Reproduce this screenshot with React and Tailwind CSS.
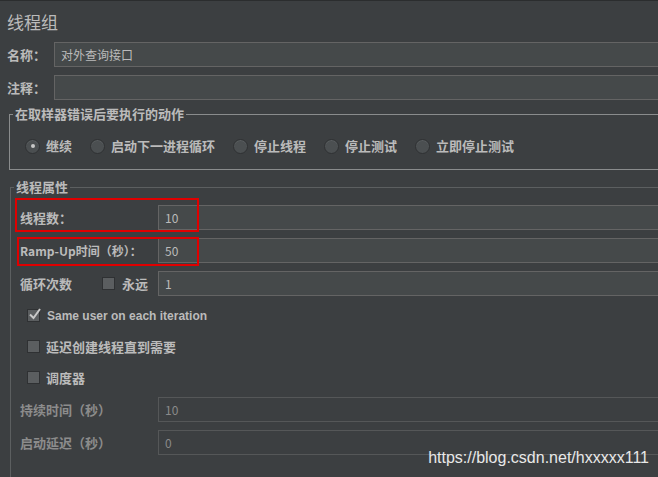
import React from 'react';

const cjk = { fontFamily: '"Noto Sans CJK SC", "Liberation Sans", sans-serif' };

function Radio({ checked }) {
  return (
    <span className="w-[15px] h-[15px] rounded-full border border-[#2f3133] bg-[#4b4f51] shadow-[inset_0_1px_0_#5a5e60] flex items-center justify-center shrink-0">
      {checked && <span className="w-[4px] h-[4px] rounded-full bg-[#c8c8c8]" />}
    </span>
  );
}

function Check({ checked }) {
  return (
    <span className="relative w-[13px] h-[13px] border border-[#2f3133] bg-[#5b5e60] shrink-0 block">
      {checked && (
        <svg className="absolute -top-[3px] left-[0px]" width="14" height="14" viewBox="0 0 14 14">
          <path d="M2 7.5 L5.5 11 L12 2" fill="none" stroke="#c9c9c9" strokeWidth="2" />
        </svg>
      )}
    </span>
  );
}

function Field({ value, disabled }) {
  return (
    <div
      className={`flex-1 h-[25px] border flex items-center pl-[6px] text-[12px] ${
        disabled
          ? 'bg-[#3c3f41] border-[#555758] text-[#8a8a8a]'
          : 'bg-[#45494a] border-[#646464] text-[#bbbbbb]'
      }`}
      style={cjk}
    >
      {value}
    </div>
  );
}

function Row({ label, value, disabled, small, children }) {
  return (
    <div className="relative flex items-center h-[25px]">
      <div
        className={`w-[138px] shrink-0 flex items-center font-bold ${small ? 'text-[12px]' : 'text-[13px]'} ${
          disabled ? 'text-[#8c8c8c]' : 'text-[#bbbbbb]'
        }`}
      >
        {label}
      </div>
      <Field value={value} disabled={disabled} />
      {children}
    </div>
  );
}

export default function App() {
  const actions = ['继续', '启动下一进程循环', '停止线程', '停止测试', '立即停止测试'];

  return (
    <div className="relative w-[658px] h-[477px] overflow-hidden bg-[#3c3f41] border-t border-[#2b2d2e]" style={cjk}>
      <div className="w-[690px]">
        {/* Title */}
        <div className="mt-[11px] pl-[7px] h-[20px] leading-[20px] text-[17px] text-[#bbbbbb]">线程组</div>

        {/* Name / comment */}
        <div className="mt-[10px] flex items-center h-[25px]">
          <div className="w-[54px] pl-[7px] text-[13px] font-bold text-[#bbbbbb]">名称：</div>
          <Field value="对外查询接口" />
        </div>
        <div className="mt-[8px] flex items-center h-[25px]">
          <div className="w-[54px] pl-[7px] text-[13px] font-bold text-[#bbbbbb]">注释：</div>
          <Field value="" />
        </div>

        {/* On sampler error */}
        <div className="relative mt-[14px] ml-[9px] h-[56px] border border-[#8a8c8d]">
          <span className="absolute -top-[10px] left-[3px] px-[2px] bg-[#3c3f41] text-[13px] font-bold leading-[18px] text-[#bbbbbb]">
            在取样器错误后要执行的动作
          </span>
          <div className="flex items-center h-full pt-[8px] pl-[15px] gap-[18px]">
            {actions.map((a, i) => (
              <div key={a} className="flex items-center gap-[6px]">
                <Radio checked={i === 0} />
                <span className="text-[13px] font-bold text-[#bbbbbb]">{a}</span>
              </div>
            ))}
          </div>
        </div>

        {/* Thread properties */}
        <div className="relative mt-[17px] ml-[10px] h-[300px] border-t border-l border-[#5c5f60] pl-[9px] pt-[17px]">
          <span className="absolute -top-[10px] left-[3px] px-[2px] bg-[#3c3f41] text-[13px] font-bold leading-[18px] text-[#bbbbbb]">
            线程属性
          </span>

          <div className="flex flex-col gap-[8px]">
            <Row label="线程数：" value="10">
              <div className="absolute -left-[5px] -top-[7px] w-[184px] h-[34px] border-2 border-[#e00000]" />
            </Row>
            <Row label="Ramp-Up时间（秒）：" value="50" small>
              <div className="absolute -left-[3px] -top-[1px] w-[182px] h-[29px] border-2 border-[#e00000]" />
            </Row>
            <div className="flex items-center h-[25px]">
              <div className="w-[82px] shrink-0 text-[13px] font-bold text-[#bbbbbb]">循环次数</div>
              <Check />
              <span className="ml-[7px] w-[36px] text-[13px] font-bold text-[#bbbbbb]">永远</span>
              <Field value="1" />
            </div>
          </div>

          <div className="mt-[4px] flex flex-col">
            <div className="h-[31px] flex items-center pl-[7px] gap-[7px]">
              <Check checked />
              <span className="text-[12px] font-bold text-[#bbbbbb]" style={{ fontFamily: '"Liberation Sans", sans-serif' }}>
                Same user on each iteration
              </span>
            </div>
            <div className="h-[31px] flex items-center pl-[7px] gap-[6px]">
              <Check />
              <span className="text-[13px] font-bold text-[#bbbbbb]">延迟创建线程直到需要</span>
            </div>
            <div className="h-[31px] flex items-center pl-[7px] gap-[6px]">
              <Check />
              <span className="text-[13px] font-bold text-[#bbbbbb]">调度器</span>
            </div>
          </div>

          <div className="mt-[4px] flex flex-col gap-[8px]">
            <Row label="持续时间（秒）" value="10" disabled />
            <Row label="启动延迟（秒）" value="0" disabled />
          </div>
        </div>
      </div>

      <span
        className="absolute right-[9px] bottom-[9px] text-[16px] leading-[20px] text-[#e8e8e8]"
        style={{ fontFamily: '"Liberation Sans", Arial, sans-serif' }}
      >
        https://blog.csdn.net/hxxxxx111
      </span>
    </div>
  );
}
